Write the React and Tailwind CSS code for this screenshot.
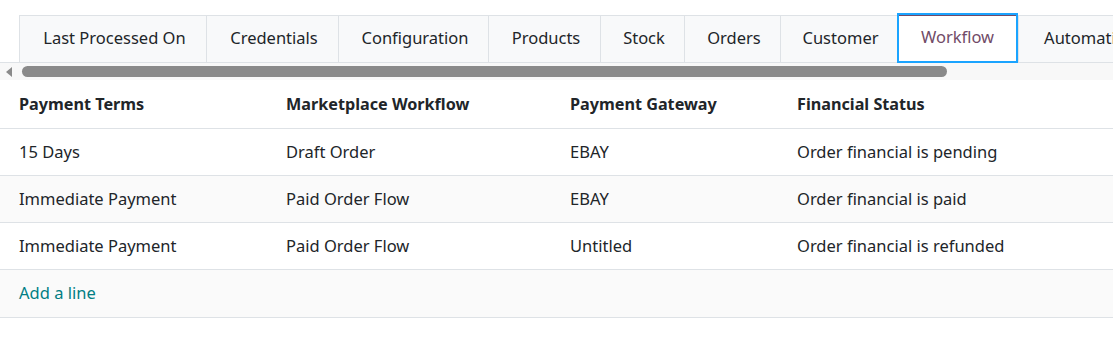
import React from "react";

const tabs = [
  { label: "Last Processed On", w: "w-[187px]" },
  { label: "Credentials", w: "w-[132px]" },
  { label: "Configuration", w: "w-[150px]" },
  { label: "Products", w: "w-[112px]" },
  { label: "Stock", w: "w-[84px]" },
  { label: "Orders", w: "w-[96px]" },
  { label: "Customer", w: "w-[117px]" },
  { label: "Workflow", w: "w-[121px]", active: true },
  { label: "Automation", w: "w-[140px]" },
];

const rows = [
  { terms: "15 Days", flow: "Draft Order", gateway: "EBAY", status: "Order financial is pending", striped: false },
  { terms: "Immediate Payment", flow: "Paid Order Flow", gateway: "EBAY", status: "Order financial is paid", striped: true },
  { terms: "Immediate Payment", flow: "Paid Order Flow", gateway: "Untitled", status: "Order financial is refunded", striped: false },
];

const cols = "grid grid-cols-[267px_284px_227px_1fr] items-center pl-[19px]";

export default function App() {
  return (
    <div className="h-[349px] w-[1113px] overflow-hidden bg-white text-[16.5px] text-[#212529] [font-family:'Noto_Sans','Open_Sans',sans-serif]">
      <div className="pt-[15px]">
        <div className="flex border-b border-[#dee2e6] pl-[19px]">
          {tabs.map((tab) =>
            tab.active ? (
              <div
                key={tab.label}
                className={`${tab.w} -mt-[2px] -mb-px flex h-[50px] shrink-0 items-center justify-center border-2 border-[#1ba4ff] bg-white pb-px text-[#714b67] shadow-[inset_0_1px_0_#714b67]`}
              >
                {tab.label}
              </div>
            ) : (
              <div
                key={tab.label}
                className={`${tab.w} flex h-[47px] shrink-0 items-center justify-center whitespace-nowrap border-l border-t border-[#dee2e6] bg-[#f8f9fa] pb-px pl-[3px]`}
              >
                {tab.label}
              </div>
            )
          )}
        </div>
        <div className="flex h-[17px] items-center bg-[#f8f8f8]">
          <div className="ml-[6px] h-0 w-0 border-y-[5px] border-r-[6px] border-y-transparent border-r-[#8a8a8a]" />
          <div className="ml-[10px] h-[11px] w-[925px] rounded-full bg-[#8a8a8a]" />
        </div>
      </div>

      <div>
        <div className={`${cols} h-[49px] border-b border-[#dee2e6] pt-px text-[16.2px] font-bold`}>
          <div>Payment Terms</div>
          <div>Marketplace Workflow</div>
          <div>Payment Gateway</div>
          <div>Financial Status</div>
        </div>
        {rows.map((row, i) => (
          <div
            key={i}
            className={`${cols} h-[47px] border-b border-[#dee2e6] ${row.striped ? "bg-[#fafafa]" : "bg-white"}`}
          >
            <div>{row.terms}</div>
            <div>{row.flow}</div>
            <div>{row.gateway}</div>
            <div>{row.status}</div>
          </div>
        ))}
        <div className="flex h-[48px] items-center border-b border-[#dee2e6] bg-[#fafafa] pl-[19px] text-[#017e84]">
          Add a line
        </div>
      </div>
    </div>
  );
}
